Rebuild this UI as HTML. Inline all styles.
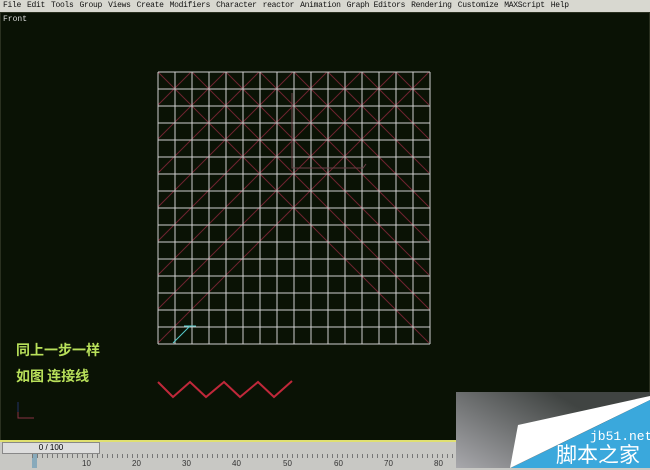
<!DOCTYPE html><html><head><meta charset="utf-8"><style>
body{margin:0;width:650px;height:468px;overflow:hidden;background:#0b1206;font-family:"Liberation Mono",monospace;position:relative}
.menu{position:absolute;left:0;top:0;width:650px;height:12px;background:#d8d8d0;font-size:8px;line-height:12px;color:#111;white-space:nowrap;letter-spacing:-0.3px}
.menu span{margin:0 3px 0 3px}
.vp{position:absolute;left:0;top:12px;width:648px;height:428px;border:1px solid #2a3020;background:#0a1205}
.lbl{position:absolute;left:3px;top:15px;font-size:8px;color:#ddd}
.cn{position:absolute;left:16px;font:bold 14px "Noto Sans CJK SC",sans-serif;color:#b8e05a}
.tl{position:absolute;left:0;top:440px;width:650px;height:28px;background:#c8c8c4;border-top:2px solid #e0e070}
</style></head><body>
<div class="menu"><span>File</span><span>Edit</span><span>Tools</span><span>Group</span><span>Views</span><span>Create</span><span>Modifiers</span><span>Character</span><span>reactor</span><span>Animation</span><span>Graph Editors</span><span>Rendering</span><span>Customize</span><span>MAXScript</span><span>Help</span></div>
<div class="vp"></div>
<div class="lbl">Front</div>
<svg width="650" height="468" style="position:absolute;left:0;top:0">
<defs><clipPath id="c"><rect x="158" y="72" width="271" height="271"/></clipPath></defs>
<g clip-path="url(#c)" stroke="#6e2430" stroke-width="1">
<path d="M158 72 L429 343 M192 72 L429 309 M226 72 L429 275 M260 72 L429 241 M294 72 L429 207 M328 72 L429 173 M362 72 L429 139 M396 72 L429 105
M429 72 L158 343 M395 72 L158 309 M361 72 L158 275 M327 72 L158 241 M293 72 L158 207 M259 72 L158 173 M225 72 L158 139 M191 72 L158 105"/>
</g>
<g stroke="#cfcfcf" stroke-width="1" id="g"></g>
<path d="M292 93 V168 H363 L366 164" stroke="#6a4048" fill="none"/>
<path d="M173 343 L190 326 M184 326 L196 326" stroke="#5cc" stroke-width="1"/>
<polyline points="158,382 173,397 190,382 206,397 224,382 240,397 258,382 274,397 292,381" stroke="#c0283a" stroke-width="2" fill="none"/>
<path d="M18 402 V418 H34" stroke="#834" fill="none"/><path d="M18 402 V412" stroke="#236" />
</svg>
<script>
var g=document.getElementById('g'),s='';for(var i=0;i<=16;i++){var p=158+i*17;s+='M'+p+' 72V344M158 '+(72+i*17)+'H430';}
g.innerHTML='<path d="'+s+'"/>';
</script>
<div class="cn" style="top:340px">同上一步一样</div>
<div class="cn" style="top:366px">如图 连接线</div>
<div class="tl">
<div style="position:absolute;left:2px;top:0;width:96px;height:10px;border:1px solid #888;background:#ddd;font:8px 'Liberation Sans';text-align:center;line-height:10px">0 / 100</div>
<div style="position:absolute;left:0;top:12px;width:650px;height:14px;font:8px 'Liberation Sans';color:#333">
<span style="position:absolute;left:32px;top:0;width:5px;height:14px;background:#8ab"></span>
<span style="position:absolute;left:82px;top:5px">10</span><span style="position:absolute;left:132px;top:5px">20</span><span style="position:absolute;left:182px;top:5px">30</span><span style="position:absolute;left:232px;top:5px">40</span><span style="position:absolute;left:283px;top:5px">50</span><span style="position:absolute;left:334px;top:5px">60</span><span style="position:absolute;left:384px;top:5px">70</span><span style="position:absolute;left:434px;top:5px">80</span>
<div style="position:absolute;left:32px;top:0;width:430px;height:4px;background:repeating-linear-gradient(90deg,#777 0 1px,transparent 1px 5px)"></div>
</div></div>
<div style="position:absolute;left:456px;top:392px;width:194px;height:76px;background:linear-gradient(30deg,#a8a8ac,#404442 70%)"></div>
<svg width="650" height="468" style="position:absolute;left:0;top:0"><polygon points="518,425 650,396 650,400 510,468" fill="#fff"/><polygon points="650,400 650,468 511,468" fill="#3aa8dc"/></svg>
<div style="position:absolute;left:590px;top:429px;font:13px 'Liberation Mono';color:#fff">jb51.net</div>
<div style="position:absolute;left:556px;top:442px;font:21px 'Noto Sans CJK SC',sans-serif;color:#fff;line-height:24px">脚本之家</div>
</body></html>
